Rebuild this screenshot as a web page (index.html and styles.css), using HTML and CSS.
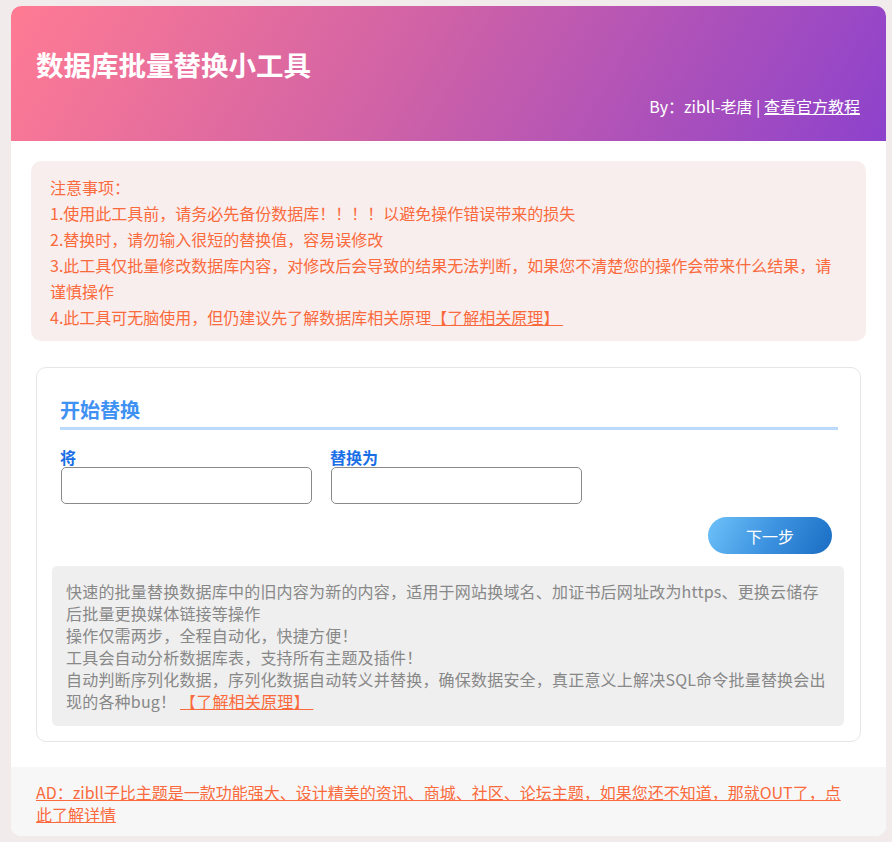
FILE: index.html
```html
<!DOCTYPE html>
<html lang="zh-CN">
<head>
  <meta charset="UTF-8" />
  <meta name="viewport" content="width=device-width, initial-scale=1.0"/>
  <title>数据库批量替换小工具</title>
  <link rel="stylesheet" href="styles.css">
</head>
<body>

  <div class="wrap">
    <header class="top">
      <h1>数据库批量替换小工具</h1>
      <div class="by">By：zibll-老唐 | <a href="#">查看官方教程</a></div>
    </header>

    <main class="main">
      <div class="notice">
        <p>注意事项：</p>
        <p>1.使用此工具前，请务必先备份数据库！！！！以避免操作错误带来的损失</p>
        <p>2.替换时，请勿输入很短的替换值，容易误修改</p>
        <p>3.此工具仅批量修改数据库内容，对修改后会导致的结果无法判断，如果您不清楚您的操作会带来什么结果，请谨慎操作</p>
        <p>4.此工具可无脑使用，但仍建议先了解数据库相关原理<a href="#">【了解相关原理】&nbsp;</a></p>
      </div>

      <section class="card">
        <form id="replaceForm" class="form">
          <h2>开始替换</h2>
          <div class="fields">
            <div class="field">
              <label for="oldText">将</label>
              <input type="text" id="oldText" name="oldText">
            </div>
            <div class="field">
              <label for="newText">替换为</label>
              <input type="text" id="newText" name="newText">
            </div>
          </div>
          <div class="actions">
            <button type="submit">下一步</button>
          </div>
        </form>

        <div class="info">
          快速的批量替换数据库中的旧内容为新的内容，适用于网站换域名、加证书后网址改为https、更换云储存后批量更换媒体链接等操作<br>
          操作仅需两步，全程自动化，快捷方便！<br>
          工具会自动分析数据库表，支持所有主题及插件！<br>
          自动判断序列化数据，序列化数据自动转义并替换，确保数据安全，真正意义上解决SQL命令批量替换会出现的各种bug！ <a href="#">【了解相关原理】&nbsp;</a>
        </div>
      </section>
    </main>

    <footer class="ad">
      <a href="#">AD：zibll子比主题是一款功能强大、设计精美的资讯、商城、社区、论坛主题，如果您还不知道，那就OUT了，点此了解详情</a>
    </footer>
  </div>

  <script>
    // just stop the page from reloading
    document.getElementById('replaceForm').addEventListener('submit', function(e) {
      e.preventDefault();
    });
  </script>

</body>
</html>
```

FILE: styles.css
```css
body {
  margin: 6px 6px 6px 11px;
  background-color: #f1ebeb;
  font-family: "Noto Sans CJK SC", "Noto Sans", sans-serif;
  font-size: 16px;
  text-spacing-trim: space-all;
}

a {
  color: inherit;
}

.wrap {
  background-color: #fff;
  border-radius: 10px;
  overflow: hidden;
}

.top {
  padding: 38px 26px 24px 25px;
  background: linear-gradient(120deg, #ff7b93 0%, #d062a6 45%, #8d42cc 100%);
  color: #fff;
}

.top h1 {
  margin: 0;
  font-size: 27.5px;
  line-height: 40px;
  font-weight: bold;
}

.by {
  margin-top: 11px;
  text-align: right;
  line-height: 22px;
}

.main {
  padding: 20px 20px 25px;
}

.notice {
  background-color: #f8eeee;
  border-radius: 10px;
  padding: 13px 19px 11px;
  color: #fb6a3c;
  line-height: 26px;
}

.notice p {
  margin: 0;
}

.card {
  margin: 26px 5px 0;
  border: 1px solid #e6e6e6;
  border-radius: 10px;
  padding: 27px 16px 15px 15px;
}

.form {
  padding: 0 6px 0 8px;
}

.form h2 {
  margin: 0;
  font-size: 20px;
  line-height: 30px;
  color: #3f91f3;
  padding-bottom: 2px;
  border-bottom: 3px solid #bcdafc;
}

.fields {
  display: flex;
  gap: 18px;
  margin-top: 18px;
}

.field {
  width: 252px;
  display: flex;
  flex-direction: column;
}

.field label {
  font-size: 16px;
  font-weight: bold;
  line-height: 19px;
  color: #1a6fe6;
}

.field input {
  margin-left: 1px;
  height: 37px;
  box-sizing: border-box;
  border: 1px solid #8a8a8a;
  border-radius: 5px;
  font-size: 15px;
  padding: 0 8px;
}

.actions {
  display: flex;
  justify-content: flex-end;
  margin-top: 13px;
  padding-right: 6px;
}

.actions button {
  width: 124px;
  height: 37px;
  border: none;
  border-radius: 19px;
  background: linear-gradient(120deg, #6ec2f9 0%, #3d93e0 50%, #1a6dc3 100%);
  color: #fff;
  font-family: inherit;
  font-size: 16px;
  cursor: pointer;
}

.info {
  margin-top: 12px;
  background-color: #efefef;
  border-radius: 5px;
  padding: 14px 14px;
  color: #888;
  line-height: 22px;
  letter-spacing: 0.2px;
}

.info a {
  color: #fb6a3c;
}

.ad {
  background-color: #f7f7f7;
  padding: 14px 34px 11px 25px;
  line-height: 22px;
  color: #fb6a3c;
}
```
